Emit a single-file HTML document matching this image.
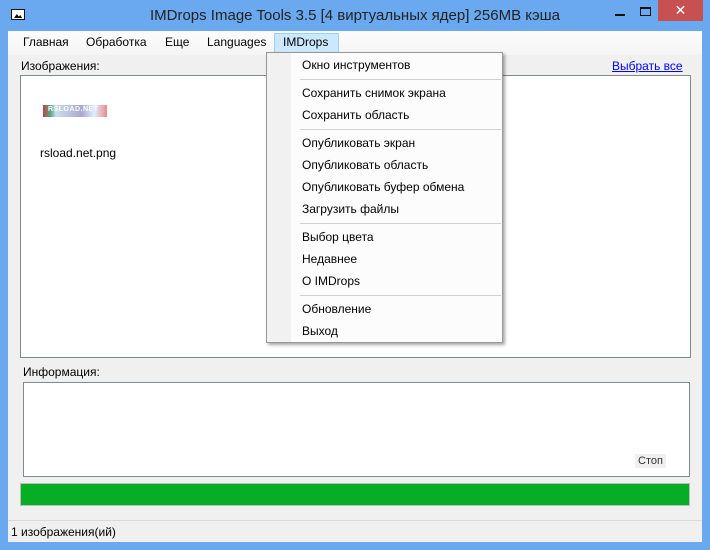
<!DOCTYPE html>
<html><head><meta charset="utf-8"><style>
*{margin:0;padding:0;box-sizing:border-box}
body{width:710px;height:550px;background:#6aa9f0;position:relative;overflow:hidden;font-family:"Segoe UI","Liberation Sans","DejaVu Sans",sans-serif;font-size:12px;color:#000}
.a{position:absolute}
.client{left:8px;top:31px;width:694px;height:511px;background:#f0f0f0}
.t{white-space:nowrap}
.mi{font-size:12px}
.sep{position:absolute;left:33px;width:201px;height:1px;background:#d0d0d0}
</style></head><body>
<div class="a" style="left:11px;top:9px;width:14px;height:11px;border:1.5px solid #111;background:#fff"></div>
<div class="a" style="left:14px;top:13px;width:8px;height:5px;background:#111;clip-path:polygon(0 100%,35% 20%,60% 70%,80% 40%,100% 100%)"></div>
<div class="a t" style="left:0;width:710px;top:7px;text-align:center;font-size:15px;color:#222">IMDrops Image Tools 3.5 [4 виртуальных ядер] 256MB кэша</div>
<div class="a" style="left:615px;top:14px;width:10px;height:2px;background:#111"></div>
<div class="a" style="left:640px;top:7px;width:11px;height:9px;border:1px solid #111;border-top-width:2px"></div>
<div class="a" style="left:658px;top:0;width:45px;height:21px;background:#c75050;color:#fff;text-align:center;font-size:14px;line-height:21px;font-weight:bold">✕</div>
<div class="a client"></div>
<div class="a" style="left:8px;top:31px;width:694px;height:24px;background:linear-gradient(#fcfcfc,#f5f5f5)"></div>
<div class="a t" style="left:23px;top:35px">Главная</div>
<div class="a t" style="left:86px;top:35px">Обработка</div>
<div class="a t" style="left:165px;top:35px">Еще</div>
<div class="a t" style="left:207px;top:35px">Languages</div>
<div class="a" style="left:274px;top:33px;width:65px;height:20px;background:#cce8ff;border:1px solid #99d1ff"></div>
<div class="a t" style="left:283px;top:35px">IMDrops</div>
<div class="a t" style="left:21px;top:59px">Изображения:</div>
<div class="a t" style="left:612px;top:59px;color:#00f;text-decoration:underline">Выбрать все</div>
<div class="a" style="left:20px;top:75px;width:671px;height:283px;background:#fff;border:1px solid #828790"></div>
<div class="a" style="left:43px;top:105px;width:64px;height:12px;background:linear-gradient(90deg,#b44 0,#5a8 12%,#cde 20%,#aac 60%,#ddeeff 80%,#e88 100%)"></div>
<div class="a t" style="left:48px;top:106px;font-size:7px;font-weight:bold;color:#fff;letter-spacing:.5px">RSLOAD.NET</div>
<div class="a t" style="left:40px;top:146px">rsload.net.png</div>
<div class="a t" style="left:23px;top:365px">Информация:</div>
<div class="a" style="left:23px;top:382px;width:667px;height:95px;background:#fff;border:1px solid #828790"></div>
<div class="a t" style="left:635px;top:454px;padding:0 3px;background:#f0f0f0;color:#333;font-size:11px;line-height:14px">Стоп</div>
<div class="a" style="left:20px;top:483px;width:670px;height:23px;background:#06ae25;border:1px solid #bcbcbc"></div>
<div class="a" style="left:8px;top:520px;width:694px;height:1px;background:#dadada"></div>
<div class="a t" style="left:11px;top:525px">1 изображения(ий)</div>
<div class="a" style="left:266px;top:52px;width:237px;height:291px;background:#fcfcfc;border:1px solid #979797;box-shadow:2px 2px 3px rgba(0,0,0,.35)">
<div class="a" style="left:0;top:0;width:24px;height:289px;background:#f1f1f1"></div>
<div class="a t mi" style="left:35px;top:5px">Окно инструментов</div>
<div class="sep" style="top:26px"></div>
<div class="a t mi" style="left:35px;top:33px">Сохранить снимок экрана</div>
<div class="a t mi" style="left:35px;top:55px">Сохранить область</div>
<div class="sep" style="top:76px"></div>
<div class="a t mi" style="left:35px;top:83px">Опубликовать экран</div>
<div class="a t mi" style="left:35px;top:105px">Опубликовать область</div>
<div class="a t mi" style="left:35px;top:127px">Опубликовать буфер обмена</div>
<div class="a t mi" style="left:35px;top:149px">Загрузить файлы</div>
<div class="sep" style="top:170px"></div>
<div class="a t mi" style="left:35px;top:177px">Выбор цвета</div>
<div class="a t mi" style="left:35px;top:199px">Недавнее</div>
<div class="a t mi" style="left:35px;top:221px">О IMDrops</div>
<div class="sep" style="top:242px"></div>
<div class="a t mi" style="left:35px;top:249px">Обновление</div>
<div class="a t mi" style="left:35px;top:271px">Выход</div>
</div>
</body></html>
